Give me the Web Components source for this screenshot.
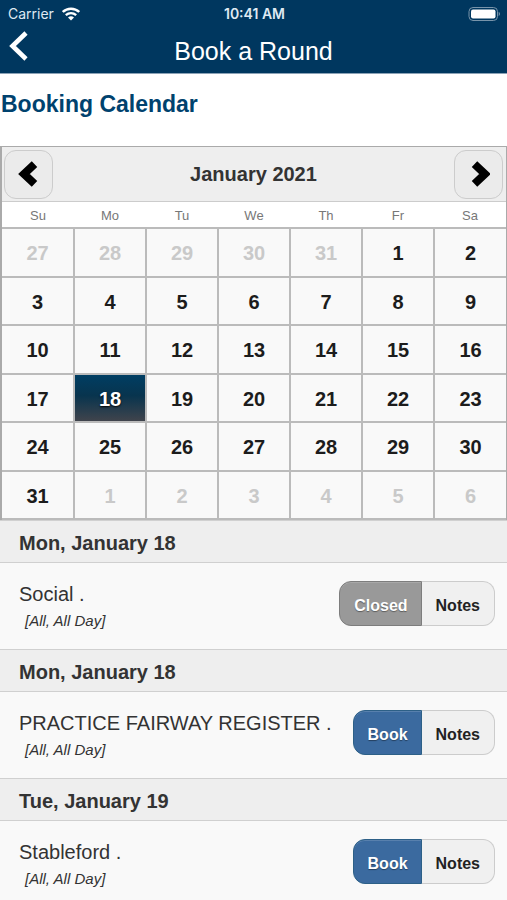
<!DOCTYPE html>
<html lang="en">
<head>
<meta charset="utf-8">
<meta name="viewport" content="width=device-width, initial-scale=1">
<title>Book a Round</title>
<style>
  html, body { margin: 0; height: 100%; background: #f9f9f9; }
  body { font-family: "Liberation Sans", Arial, sans-serif; color: #333; }
</style>
</head>
<body>
<golf-app></golf-app>
<script>
const define = (name, html, setup) => {
  const template = document.createElement('template');
  template.innerHTML = html;
  customElements.define(name, class extends HTMLElement {
    connectedCallback() {
      if (this.shadowRoot) return;
      this.attachShadow({ mode: 'open' }).append(template.content.cloneNode(true));
      if (setup) setup(this, this.shadowRoot);
    }
  });
};

define('status-bar', `
  <style>
    :host { display: grid; grid-template-columns: 1fr auto 1fr; align-items: center; height: 28px; padding: 0 6px 0 8px; font: 14px/20px Inter, "Liberation Sans", sans-serif; color: #dfe9f2; }
    .carrier { display: flex; align-items: center; gap: 8px; }
    .time { font-weight: 600; }
    .battery { justify-self: end; display: flex; }
  </style>
  <span class="carrier"><span>Carrier</span>
    <svg width="18" height="14" viewBox="0 0 18 14" aria-hidden="true"><g fill="none" stroke="#fff" stroke-width="2.4"><path d="M.8 5C5.300.6 12.700.6 17.200 5"/><path d="M3.800 8.200C6.900 5.500 11.100 5.500 14.200 8.200"/></g><path d="M6 10.400Q9 8.300 12 10.400L9 13.500Z" fill="#fff"/></svg>
  </span>
  <span class="time">10:41 AM</span>
  <svg class="battery" width="33" height="16" viewBox="0 0 33 16" aria-hidden="true"><rect x="1" y="1.500" width="28.500" height="13" rx="4" fill="none" stroke="#7894aa"/><rect x="3" y="3.500" width="24.500" height="9" rx="2" fill="#fff"/><path d="M30.700 5.800Q33.300 8 30.700 10.200Z" fill="#7894aa"/></svg>
`);

define('title-bar', `
  <style>
    :host { display: grid; grid-template-columns: 1fr auto 1fr; align-items: center; height: 45px; padding: 0 8px; border-bottom: 1px solid #8ba2b6; color: #fff; }
    h1 { margin: 0; font-size: 25px; line-height: 30px; font-weight: 400; }
    button { justify-self: start; align-self: start; display: flex; padding: 2px 0; border: 0; background: none; color: inherit; }
  </style>
  <button type="button" aria-label="Back"><svg width="22" height="31" viewBox="0 0 22 31" aria-hidden="true"><path d="M18 3L4.500 16L18 29" fill="none" stroke="currentColor" stroke-width="4.600"/></svg></button>
  <h1><slot></slot></h1>
`);

define('month-calendar', `
  <style>
    :host { display: block; border: 1px solid #aaa; border-left-width: 2px; border-bottom: 0; background: #fff; }
    header { display: flex; align-items: center; justify-content: space-between; height: 55px; padding: 0 3px 0 2px; background: #eee; border-bottom: 1px solid #ccc; box-sizing: border-box; }
    h3 { margin: 0; font-size: 20px; line-height: 24px; }
    header button { display: grid; place-items: center; width: 49px; height: 49px; padding: 0; border: 1px solid #ccc; border-radius: 12px; background: #ebebeb; color: #000; }
    table { width: 100%; height: 318px; table-layout: fixed; border-collapse: collapse; border-style: hidden; border-bottom: 1px solid #aaa; }
    th { height: 26px; padding: 3px 0 0; font-size: 13px; line-height: 18px; font-weight: 400; color: #777; box-sizing: border-box; }
    td { padding: 0; border: 2px solid #bbb; background: #f9f9f9; }
    td.selected { background: linear-gradient(#003e63, #08344e 45%, #40444c); }
    td button { display: block; width: 100%; height: 46px; padding: 2px 0 0; border: 0; background: none; font: bold 20px/24px "Liberation Sans", Arial, sans-serif; color: #1c1c1c; }
    .outside button { color: #c9c9c9; }
    .selected button { color: #fff; text-shadow: 0 1px 2px #000; }
  </style>
  <header>
    <button type="button" aria-label="Previous month"><svg width="24" height="30" viewBox="0 0 24 30" aria-hidden="true"><path d="M17.500 5.200L7 15L17.500 24.800" fill="none" stroke="currentColor" stroke-width="8" stroke-linejoin="miter"/></svg></button>
    <h3>January 2021</h3>
    <button type="button" aria-label="Next month"><svg width="24" height="30" viewBox="0 0 24 30" aria-hidden="true"><path d="M8.500 5.200L19 15L8.500 24.800" fill="none" stroke="currentColor" stroke-width="8" stroke-linejoin="miter"/></svg></button>
  </header>
  <table><thead><tr></tr></thead><tbody></tbody></table>
`, (host, root) => {
  for (const day of ['Su', 'Mo', 'Tu', 'We', 'Th', 'Fr', 'Sa']) {
    const th = document.createElement('th');
    th.scope = 'col';
    th.textContent = day;
    root.querySelector('thead tr').append(th);
  }
  const selected = Number(host.getAttribute('selected'));
  const body = root.querySelector('tbody');
  for (let week = 0; week < 6; week++) {
    const row = body.insertRow();
    for (let d = 0; d < 7; d++) {
      const date = new Date(2021, 0, week * 7 + d - 4);
      const cell = row.insertCell();
      const button = document.createElement('button');
      button.type = 'button';
      button.textContent = date.getDate();
      cell.append(button);
      if (date.getMonth() !== 0) cell.className = 'outside';
      else if (date.getDate() === selected) cell.className = 'selected';
    }
  }
});

define('booking-item', `
  <style>
    :host { display: block; }
    h3 { margin: 0; padding: 0 19px; height: 43px; box-sizing: border-box; border-top: 1px solid #d0d0d0; border-bottom: 1px solid #d0d0d0; background: #eee; font-size: 20px; line-height: 44px; }
    .row { display: flex; align-items: flex-start; justify-content: space-between; padding: 18px 12px 0 19px; min-height: 68px; background: #f9f9f9; }
    p { margin: 0; font-size: 20px; line-height: 26px; white-space: nowrap; }
    em { display: block; padding: 5px 0 0 6px; font-size: 15px; line-height: 18px; }
    .actions { display: flex; }
    button { height: 45px; padding: 4px 14px 0; border: 1px solid #ccc; font: bold 16px/20px "Liberation Sans", Arial, sans-serif; }
    .state { padding-right: 13px; border-color: #2d6087; border-radius: 12px 0 0 12px; background: #3b6a9f; color: #fff; text-shadow: 0 1px 1px #0006; box-shadow: inset 0 1px 0 #ffffff26; }
    .state.closed { border-color: #7d7d7d; background: #999; }
    .notes { border-left: 0; border-radius: 0 12px 12px 0; background: #f0f0f0; color: #222; }
  </style>
  <h3><slot name="date"></slot></h3>
  <div class="row">
    <div><p><slot></slot></p><em>[All, All Day]</em></div>
    <div class="actions"><button type="button" class="state"></button><button type="button" class="notes">Notes</button></div>
  </div>
`, (host, root) => {
  const button = root.querySelector('.state');
  const closed = host.hasAttribute('closed');
  button.textContent = closed ? 'Closed' : 'Book';
  button.classList.toggle('closed', closed);
});

define('golf-app', `
  <style>
    :host { display: flex; flex-direction: column; height: 100vh; overflow: hidden; }
    .top { flex: none; background: #00375f; }
    main { flex: 1; min-height: 0; overflow-y: auto; scrollbar-width: none; }
    h2 { margin: 0; padding: 16px 1px 28px; background: #fff; font-size: 23px; line-height: 28px; color: #00426e; }
  </style>
  <div class="top"><status-bar></status-bar><title-bar>Book a Round</title-bar></div>
  <main>
    <h2>Booking Calendar</h2>
    <month-calendar selected="18"></month-calendar>
    <booking-item closed><span slot="date">Mon, January 18</span>Social .</booking-item>
    <booking-item><span slot="date">Mon, January 18</span>PRACTICE FAIRWAY REGISTER .</booking-item>
    <booking-item><span slot="date">Tue, January 19</span>Stableford .</booking-item>
  </main>
`);
</script>
</body>
</html>
